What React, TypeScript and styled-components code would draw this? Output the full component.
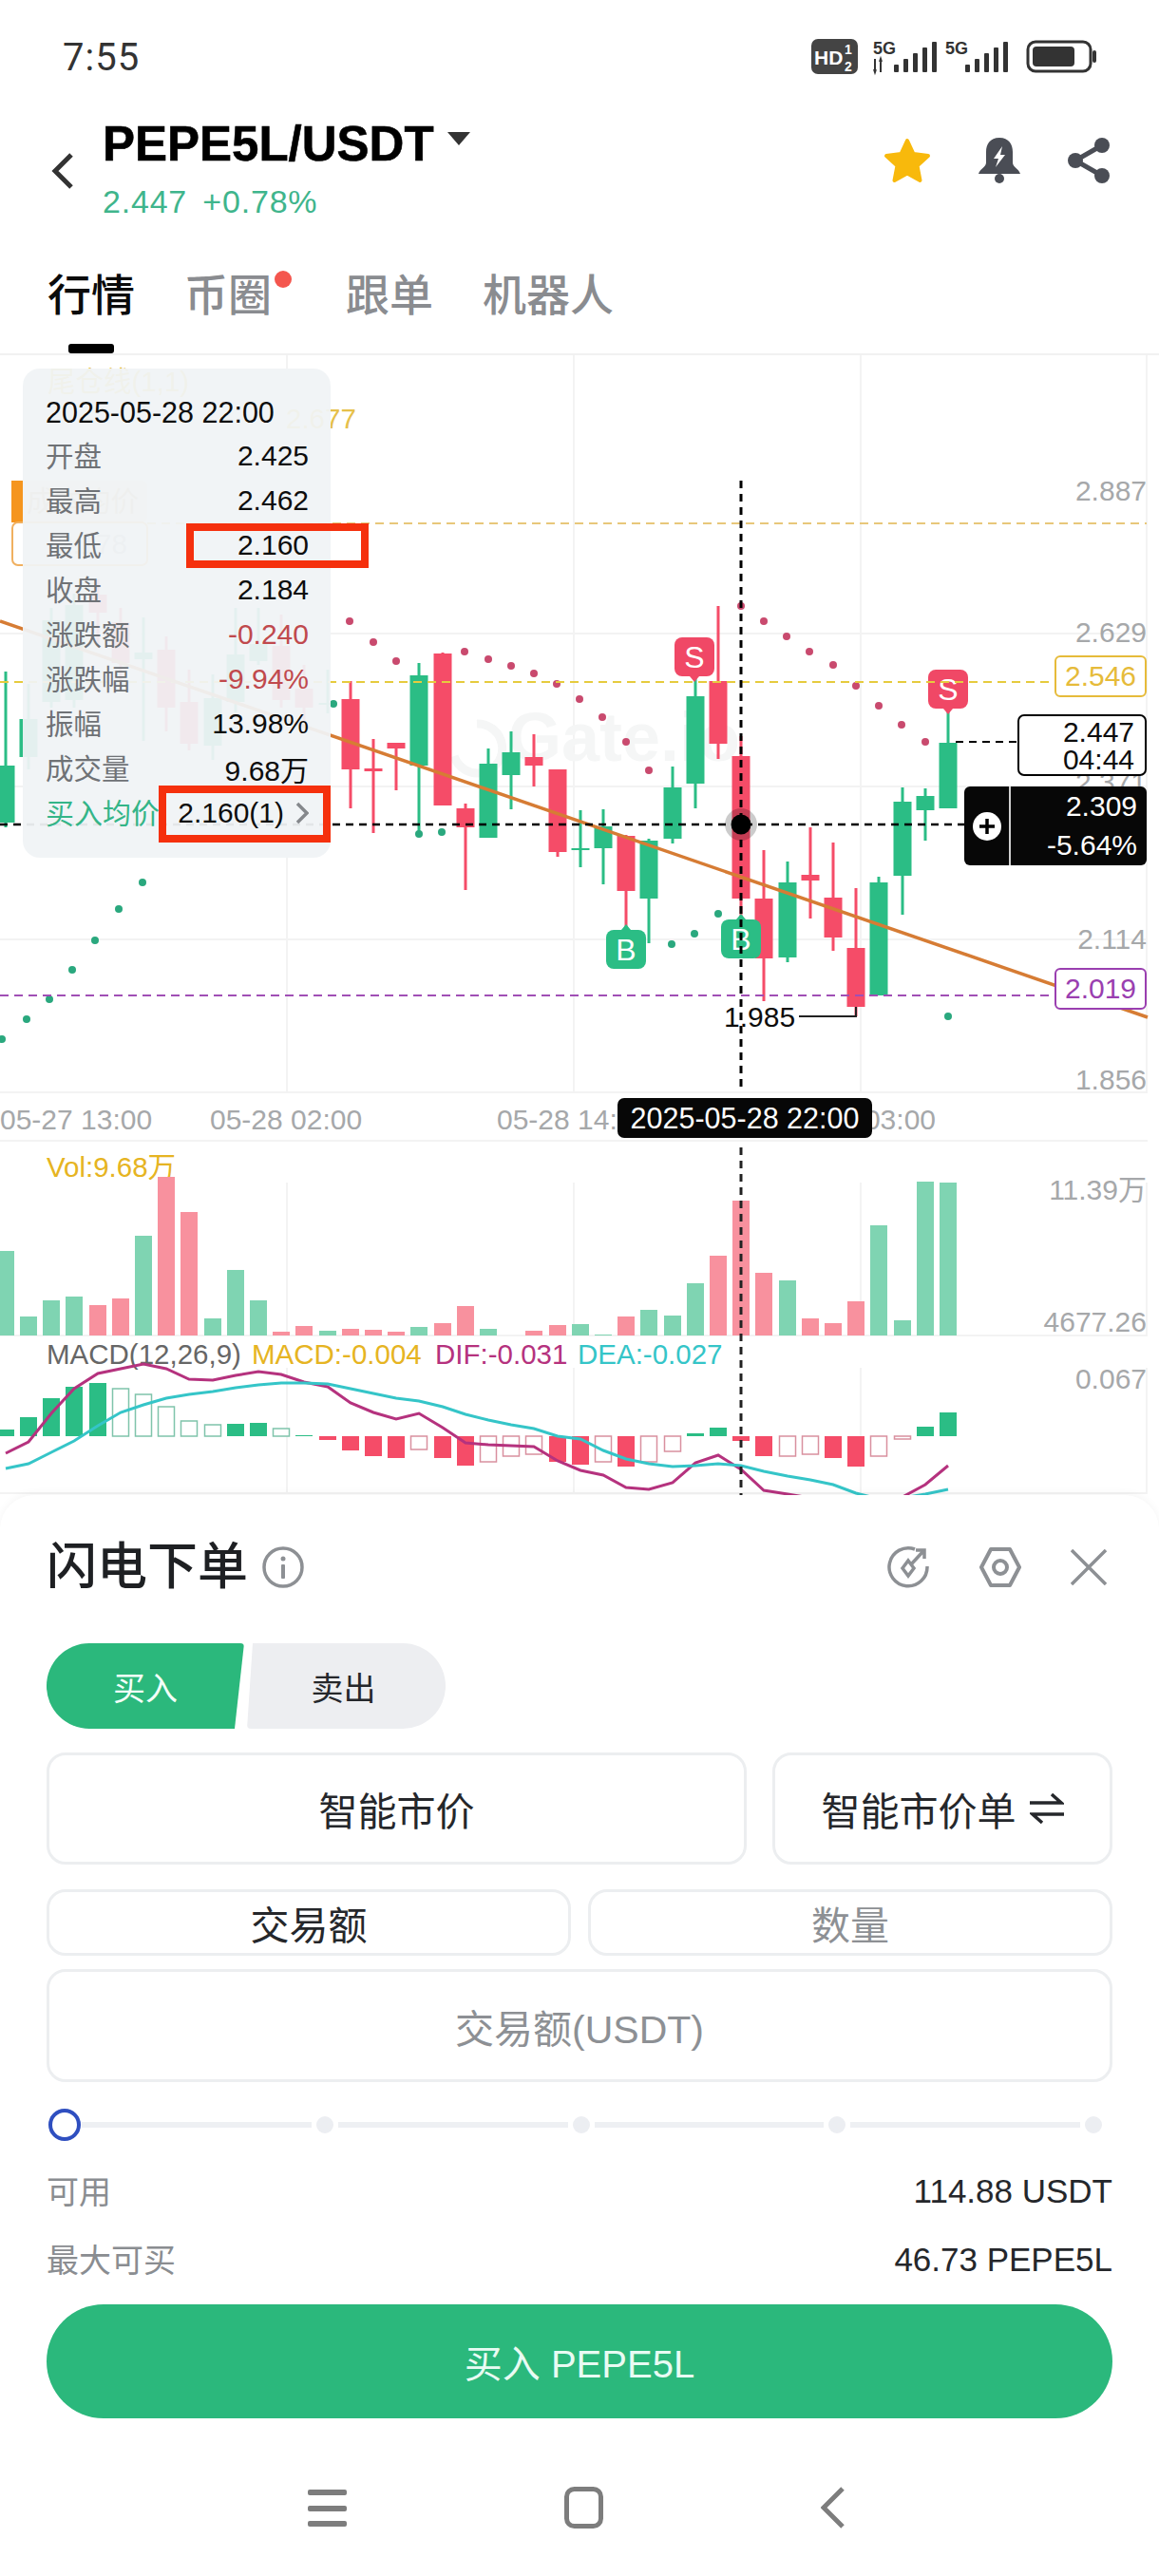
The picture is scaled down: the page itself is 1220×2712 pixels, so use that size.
import React from 'react';
import styled, { createGlobalStyle } from 'styled-components';

const GlobalStyle = createGlobalStyle`
  html, body {
    margin: 0;
    padding: 0;
    background: #fff;
    font-family: "Liberation Sans", "Noto Sans CJK SC", sans-serif;
  }
  * { box-sizing: border-box; }
`;

const Screen = styled.div`
  width: 1220px;
  height: 2712px;
  overflow: hidden;
  display: flex;
  flex-direction: column;
  background: #fff;
`;

const StatusBar = styled.div`
  height: 120px;
  padding: 0 65px 0 66px;
  display: flex;
  justify-content: space-between;
  align-items: center;
`;

const Clock = styled.span`
  font-family: "Roboto", sans-serif;
  font-size: 40px;
  letter-spacing: 1px;
  color: #333;
`;

const Header = styled.div`
  height: 120px;
  padding: 0 51px 0 53px;
  display: flex;
  align-items: center;
`;

const TitleBlock = styled.div`
  margin-left: 29px;
  flex: 1;
  display: flex;
  flex-direction: column;
  padding-bottom: 7px;
`;

const TitleRow = styled.div`
  display: flex;
  align-items: flex-start;
  gap: 14px;
`;

const Pair = styled.div`
  font-size: 51px;
  line-height: 56px;
  font-weight: 700;
  color: #000;
  -webkit-text-stroke: 0.6px #000;
`;

const Ticker = styled.div`
  margin-top: 14px;
  font-size: 34px;
  line-height: 36px;
  font-weight: 500;
  color: #3fb58c;
  letter-spacing: 0.8px;
  word-spacing: 6px;
`;

const HeaderIcons = styled.div`
  margin-bottom: 22px;
  display: flex;
  align-items: center;
  gap: 48px;
`;

const Tabs = styled.div`
  height: 132px;
  padding: 45px 0 0 50px;
  display: flex;
  gap: 52px;
`;

const Tab = styled.div<{ $active?: boolean; $dot?: boolean }>`
  position: relative;
  height: 87px;
  font-size: 46px;
  line-height: 52px;
  font-weight: 500;
  color: ${(p) => (p.$active ? '#0b0b0b' : '#8a8c90')};
  margin-right: ${(p) => (p.$dot ? '26px' : '0')};

  ${(p) =>
    p.$active &&
    `&::after {
      content: '';
      position: absolute;
      left: 22px;
      bottom: 0;
      width: 48px;
      height: 10px;
      border-radius: 3px;
      background: #000;
    }`}

  ${(p) =>
    p.$dot &&
    `&::before {
      content: '';
      position: absolute;
      left: 95px;
      top: 0;
      width: 18px;
      height: 18px;
      border-radius: 50%;
      background: #f4564e;
    }`}
`;

const Chart = styled.div`
  position: relative;
  height: 1202px;
  overflow: hidden;
  border-top: 2px solid #f1f1f1;
`;

const ChartCanvas = styled.svg`
  display: block;
  position: absolute;
  left: 0;
  top: -2px;
`;

const AxisText = styled.text`
  font-size: 30px;
  fill: #a6a8aa;
`;

const IndicatorText = styled.text<{ $color: string }>`
  font-size: 29.5px;
  fill: ${(p) => p.$color};
`;

const MarkerText = styled.text`
  font-size: 32px;
  fill: #fff;
  text-anchor: middle;
`;

const Watermark = styled.text`
  font-size: 72px;
  font-weight: 700;
  fill: #f5f6f6;
`;

const InfoCard = styled.div`
  position: absolute;
  left: 24px;
  top: 14px;
  width: 324px;
  height: 515px;
  padding: 23px 23px 0 24px;
  border-radius: 18px;
  background: rgba(240, 243, 245, 0.94);
`;

const InfoDate = styled.div`
  height: 45px;
  font-size: 30.5px;
  line-height: 47px;
  color: #0d0d0d;
`;

const InfoRow = styled.div`
  height: 47px;
  display: flex;
  justify-content: space-between;
  align-items: center;
`;

const InfoLabel = styled.span<{ $accent?: boolean }>`
  margin-bottom: 3px;
  font-size: ${(p) => (p.$accent ? '30px' : '29.5px')};
  color: ${(p) => (p.$accent ? '#34b588' : '#6f7276')};
`;

const InfoValue = styled.span<{ $down?: boolean }>`
  display: flex;
  align-items: center;
  gap: 12px;
  font-size: 30px;
  color: ${(p) => (p.$down ? '#c0494d' : '#0d0d0d')};
`;

const Highlight = styled.div<{ $x: number; $y: number; $w: number; $h: number }>`
  position: absolute;
  left: ${(p) => p.$x}px;
  top: ${(p) => p.$y}px;
  width: ${(p) => p.$w}px;
  height: ${(p) => p.$h}px;
  border: 8px solid #f5300d;
`;

const PriceTag = styled.div<{ $y: number; $color: string }>`
  position: absolute;
  left: 1110px;
  top: ${(p) => p.$y}px;
  width: 97px;
  height: 44px;
  display: flex;
  align-items: center;
  justify-content: center;
  background: #fff;
  border: 2px solid ${(p) => p.$color};
  border-radius: 6px;
  font-size: 30px;
  color: ${(p) => p.$color};
`;

const LastPriceTag = styled.div`
  position: absolute;
  left: 1071px;
  top: 378px;
  width: 136px;
  height: 65px;
  padding-right: 11px;
  display: flex;
  flex-direction: column;
  align-items: flex-end;
  justify-content: center;
  background: #fff;
  border: 2px solid #000;
  border-radius: 7px;
  font-size: 30px;
  line-height: 29px;
  color: #0d0d0d;
`;

const CrossTag = styled.div`
  position: absolute;
  left: 1015px;
  top: 454px;
  width: 192px;
  height: 83px;
  display: flex;
  background: #070707;
  border-radius: 6px;
  color: #fff;
`;

const CrossPlus = styled.div`
  width: 49px;
  display: flex;
  align-items: center;
  justify-content: center;
  border-right: 2px solid #cfcfcf;
`;

const CrossValues = styled.div`
  flex: 1;
  padding-right: 10px;
  display: flex;
  flex-direction: column;
  align-items: flex-end;
  justify-content: center;
  gap: 13px;
  font-size: 30px;
  line-height: 28px;
`;

const TimeTag = styled.div`
  position: absolute;
  left: 650px;
  top: 782px;
  width: 268px;
  height: 42px;
  display: flex;
  align-items: center;
  justify-content: center;
  background: #070707;
  border-radius: 7px;
  font-size: 30.5px;
  color: #fff;
`;

const Panel = styled.div`
  flex: 1;
  position: relative;
  padding: 50px 49px 0;
  background: #fff;
  border-radius: 36px 36px 0 0;
  box-shadow: 0 -2px 8px rgba(0, 0, 0, 0.04);
  display: flex;
  flex-direction: column;
`;

const PanelHead = styled.div`
  height: 52px;
  display: flex;
  align-items: center;
`;

const PanelTitle = styled.div`
  font-size: 53px;
  line-height: 52px;
  font-weight: 500;
  color: #1e2023;
  margin-right: 14px;
`;

const PanelActions = styled.div`
  margin-left: auto;
  padding-right: 6px;
  display: flex;
  align-items: center;
  gap: 52px;
`;

const SideSwitch = styled.div`
  margin-top: 54px;
  display: flex;
  gap: 3px;
`;

const SideButton = styled.div<{ $buy?: boolean }>`
  width: ${(p) => (p.$buy ? '208px' : '209px')};
  height: 90px;
  padding-right: ${(p) => (p.$buy ? '0' : '6px')};
  display: flex;
  align-items: center;
  justify-content: center;
  font-size: 34px;
  color: ${(p) => (p.$buy ? '#f2fff9' : '#25272b')};
  background: ${(p) => (p.$buy ? '#2bb87c' : '#edeef1')};
  border-radius: ${(p) => (p.$buy ? '45px 4px 4px 45px' : '4px 45px 45px 4px')};
  clip-path: ${(p) =>
    p.$buy
      ? 'polygon(0 0, 100% 0, calc(100% - 10px) 100%, 0 100%)'
      : 'polygon(6px 0, 100% 0, 100% 100%, 0 100%)'};
`;

const MarketRow = styled.div`
  margin-top: 25px;
  display: grid;
  grid-template-columns: 737px 1fr;
  gap: 27px;
`;

const Field = styled.div<{ $h: number; $muted?: boolean }>`
  height: ${(p) => p.$h}px;
  display: flex;
  align-items: center;
  justify-content: center;
  gap: 14px;
  border: 3px solid #eceef0;
  border-radius: 20px;
  font-size: 41px;
  color: ${(p) => (p.$muted ? '#8d9094' : '#25272b')};
`;

const AmountTabs = styled.div`
  margin-top: 26px;
  display: grid;
  grid-template-columns: 1fr 1fr;
  gap: 18px;
`;

const AmountInput = styled(Field)`
  margin-top: 14px;
`;

const Slider = styled.div`
  margin-top: 28px;
  height: 34px;
  padding: 0 11px 0 2px;
  display: flex;
  align-items: center;
  gap: 5px;
`;

const SliderThumb = styled.div`
  width: 34px;
  height: 34px;
  margin-right: -4px;
  border-radius: 50%;
  border: 4px solid #2f4fc0;
  background: #fff;
`;

const SliderTrack = styled.div`
  flex: 1;
  height: 6px;
  background: #eef0f3;
`;

const SliderTick = styled.div`
  width: 18px;
  height: 18px;
  border-radius: 50%;
  background: #eceef2;
`;

const BalanceList = styled.div`
  margin-top: 33px;
  display: flex;
  flex-direction: column;
  gap: 32px;
`;

const BalanceRow = styled.div`
  height: 40px;
  display: flex;
  justify-content: space-between;
  align-items: center;
`;

const BalanceLabel = styled.span`
  margin-bottom: 4px;
  font-size: 34px;
  color: #8a8d91;
`;

const BalanceValue = styled.span`
  font-size: 35px;
  color: #25272b;
`;

const BuyButton = styled.div`
  margin-top: 27px;
  height: 120px;
  flex-shrink: 0;
  display: flex;
  align-items: center;
  justify-content: center;
  border-radius: 60px;
  background: #2bb87c;
  font-size: 40px;
  color: #e8fbf3;
`;

const NavBar = styled.div`
  flex: 1;
  padding: 22px 7px 0 0;
  display: flex;
  align-items: center;
  justify-content: center;
  gap: 229px;
`;

// [body top, body bottom, wick top, wick bottom, up]
const candles: [number, number, number, number, boolean][] = [
  [806, 866, 707, 871, true],
  [757, 797, 720, 810, true],
  [653, 739, 640, 745, true],
  [637, 737, 625, 745, true],
  [626, 645, 610, 680, false],
  [655, 698, 640, 720, false],
  [687, 694, 650, 780, true],
  [684, 745, 670, 770, false],
  [739, 783, 705, 790, false],
  [735, 785, 710, 800, true],
  [689, 739, 640, 750, true],
  [678, 696, 640, 700, true],
  [680, 737, 647, 745, false],
  [725, 745, 700, 760, false],
  [740, 742, 705, 751, true],
  [736, 810, 717, 851, false],
  [809, 812, 778, 877, false],
  [782, 788, 782, 832, false],
  [711, 806, 698, 878, true],
  [688, 848, 687, 848, false],
  [851, 871, 846, 937, false],
  [804, 882, 788, 882, true],
  [792, 816, 770, 852, true],
  [797, 806, 773, 828, false],
  [810, 897, 810, 902, false],
  [893, 895, 853, 913, true],
  [870, 893, 852, 931, true],
  [880, 938, 879, 978, false],
  [885, 946, 883, 993, true],
  [829, 883, 807, 888, true],
  [733, 825, 712, 851, true],
  [717, 783, 638, 799, false],
  [796, 946, 775, 967, false],
  [946, 1009, 895, 1054, false],
  [929, 1008, 907, 1013, true],
  [921, 927, 871, 967, false],
  [945, 987, 887, 1001, false],
  [998, 1060, 935, 1070, false],
  [929, 1048, 923, 1048, true],
  [844, 922, 829, 963, true],
  [838, 853, 830, 885, true],
  [782, 851, 748, 851, true],
];

const volumes = [
  89, 20, 37, 41, 32, 39, 105, 167, 130, 18, 69, 37, 4, 10, 5, 7, 6, 4, 9, 13, 31, 7, 0, 5, 11, 12,
  1, 20, 27, 21, 55, 84, 142, 66, 58, 18, 13, 36, 116, 16, 162, 161,
];

// positive goes up from the zero line; hollow bars are the shrinking ones
const macdBars: [number, boolean][] = [
  [7, false], [20, false], [40, false], [52, false], [56, false], [50, true], [44, true],
  [31, true], [16, true], [12, true], [13, false], [14, false], [8, true], [1, false],
  [-4, false], [-15, false], [-21, false], [-23, false], [-14, true], [-23, false], [-31, false],
  [-27, true], [-21, true], [-19, true], [-27, false], [-30, false], [-27, true], [-32, false],
  [-27, true], [-16, true], [3, false], [9, false], [-5, false], [-21, false], [-21, true],
  [-19, true], [-23, false], [-32, false], [-21, true], [-3, true], [10, false], [25, false],
];

const difLine = [
  1530, 1518, 1488, 1462, 1446, 1441, 1436, 1441, 1452, 1453, 1448, 1444, 1447, 1455, 1460, 1477,
  1487, 1494, 1488, 1503, 1519, 1521, 1522, 1523, 1538, 1548, 1553, 1566, 1568, 1561, 1540, 1532,
  1547, 1569, 1573, 1577, 1582, 1587, 1585, 1576, 1563, 1543,
];

const deaLine = [
  1546, 1541, 1529, 1517, 1501, 1487, 1479, 1472, 1468, 1465, 1461, 1458, 1456, 1456, 1457, 1462,
  1467, 1472, 1475, 1481, 1489, 1495, 1500, 1504, 1512, 1515, 1527, 1536, 1541, 1544, 1543, 1541,
  1543, 1549, 1554, 1558, 1563, 1572, 1578, 1577, 1573, 1568,
];

const redDots = [
  [974, 781], [949, 763], [925, 743], [901, 722], [877, 700], [852, 686], [828, 670], [804, 654],
  [780, 638], [683, 811], [659, 781], [634, 755], [610, 736], [586, 720], [562, 709], [538, 701],
  [514, 694], [489, 686], [417, 696], [393, 676], [368, 654],
];

const greenDots = [
  [998, 1070], [756, 962], [731, 983], [707, 994], [441, 878], [465, 876], [351, 741], [150, 929],
  [125, 957], [100, 990], [76, 1021], [52, 1052], [28, 1073], [2, 1094],
];

const UP = '#2bbd85';
const DOWN = '#f54c68';
const candleX = (i: number) => Math.round(998 - 24.2 * (41 - i));
const toPoints = (line: number[]) => line.map((y, i) => `${candleX(i)},${y}`).join(' ');

const Marker = ({ x, y, label, color }: { x: number; y: number; label: string; color: string }) => (
  <g>
    <rect x={x - 21} y={y} width={42} height={41} rx={8} fill={color} />
    <path d={`M${x - 5} ${y + (label === 'S' ? 41 : 0)} L${x} ${y + (label === 'S' ? 47 : -6)} L${x + 5} ${y + (label === 'S' ? 41 : 0)}Z`} fill={color} />
    <MarkerText x={x} y={y + 32}>
      {label}
    </MarkerText>
  </g>
);

const ChartDrawing = () => (
  <ChartCanvas width={1220} height={1204} viewBox="0 372 1220 1204">
    {/* grid */}
    <g stroke="#f3f3f3" strokeWidth={2}>
      {[667, 828, 989, 1150, 1201, 1406, 1572].map((y) => (
        <line key={y} x1={0} x2={1208} y1={y} y2={y} />
      ))}
      {[302, 604, 906, 1207].map((x) => (
        <g key={x}>
          <line x1={x} x2={x} y1={374} y2={1150} />
          <line x1={x} x2={x} y1={1245} y2={1406} />
          <line x1={x} x2={x} y1={1440} y2={1572} />
        </g>
      ))}
    </g>

    <Watermark x={535} y={801}>
      Gate.io
    </Watermark>
    <path d="M502 762 A26 26 0 1 1 478 796" fill="none" stroke="#f5f6f6" strokeWidth={9} />

    {/* position lines that sit behind the info card */}
    <IndicatorText $color="#e6c04a" x={50} y={412}>
      尾仓线(1,1)
    </IndicatorText>
    <IndicatorText $color="#e6c04a" x={301} y={451}>
      2.677
    </IndicatorText>
    <rect x={12} y={506} width={143} height={44} rx={6} fill="#fbe8d0" />
    <rect x={12} y={506} width={12} height={44} fill="#f5951e" />
    <IndicatorText $color="#c9a67a" x={28} y={538}>
      成本均价
    </IndicatorText>
    <rect x={13} y={550} width={142} height={45} rx={6} fill="#fff" stroke="#f0b060" strokeWidth={2} />
    <IndicatorText $color="#b0b0b0" x={60} y={583}>
      2.178
    </IndicatorText>

    {/* axis labels */}
    <g textAnchor="end">
      <AxisText x={1207} y={527}>2.887</AxisText>
      <AxisText x={1207} y={676}>2.629</AxisText>
      <AxisText x={1207} y={834}>2.371</AxisText>
      <AxisText x={1207} y={999}>2.114</AxisText>
      <AxisText x={1207} y={1147}>1.856</AxisText>
      <AxisText x={1207} y={1263}>11.39万</AxisText>
      <AxisText x={1207} y={1402}>4677.26</AxisText>
      <AxisText x={1207} y={1462}>0.067</AxisText>
      <AxisText x={985} y={1189}>03:00</AxisText>
    </g>
    <AxisText x={0} y={1189}>05-27 13:00</AxisText>
    <AxisText x={221} y={1189}>05-28 02:00</AxisText>
    <AxisText x={523} y={1189}>05-28 14:</AxisText>

    {/* candles */}
    {candles.map(([top, bottom, wickTop, wickBottom, up], i) => {
      const x = candleX(i);
      const color = up ? UP : DOWN;
      return (
        <g key={i} fill={color}>
          <rect x={x - 1.5} y={wickTop} width={3} height={wickBottom - wickTop} />
          <rect x={x - 9.5} y={top} width={19} height={bottom - top} />
        </g>
      );
    })}
    {redDots.map(([x, y]) => (
      <circle key={`${x}-${y}`} cx={x} cy={y} r={4} fill="#c94a6e" />
    ))}
    {greenDots.map(([x, y]) => (
      <circle key={`${x}-${y}`} cx={x} cy={y} r={4} fill="#2aa87e" />
    ))}

    <Marker x={731} y={671} label="S" color="#f04866" />
    <Marker x={998} y={705} label="S" color="#f04866" />
    <Marker x={659} y={979} label="B" color="#2bbd85" />
    <Marker x={780} y={968} label="B" color="#2bbd85" />

    {/* price lines and trend */}
    <line x1={155} x2={1207} y1={551} y2={551} stroke="#e8c77a" strokeWidth={2} strokeDasharray="9 6" />
    <line x1={0} x2={1110} y1={718} y2={718} stroke="#e6cb3e" strokeWidth={2} strokeDasharray="9 6" />
    <line x1={0} x2={1110} y1={1048} y2={1048} stroke="#a04fb5" strokeWidth={2} strokeDasharray="9 6" />
    <line x1={0} x2={1208} y1={654} y2={1071} stroke="#d67c34" strokeWidth={3.5} />

    {/* low marker */}
    <text x={762} y={1081} fontSize={30} fill="#0d0d0d">
      1.985
    </text>
    <path d="M841 1070 H901 V1060" fill="none" stroke="#222" strokeWidth={2} />
    <line x1={1006} x2={1071} y1={781} y2={781} stroke="#000" strokeWidth={2} strokeDasharray="8 6" />

    {/* volume */}
    <IndicatorText $color="#e6b422" x={49} y={1239}>
      Vol:9.68万
    </IndicatorText>
    {volumes.map((h, i) => (
      <rect
        key={i}
        x={candleX(i) - 9}
        y={1406 - h}
        width={18}
        height={h}
        fill={candles[i][4] ? '#7fd4b2' : '#f8919e'}
      />
    ))}

    {/* macd */}
    <IndicatorText $color="#666" x={49} y={1436}>MACD(12,26,9)</IndicatorText>
    <IndicatorText $color="#e6b422" x={265} y={1436}>MACD:-0.004</IndicatorText>
    <IndicatorText $color="#b5327e" x={458} y={1436}>DIF:-0.031</IndicatorText>
    <IndicatorText $color="#35c5c8" x={608} y={1436}>DEA:-0.027</IndicatorText>
    {macdBars.map(([h, hollow], i) => {
      const color = h > 0 ? UP : DOWN;
      const y = h > 0 ? 1512 - h : 1512;
      const height = Math.abs(h);
      return hollow ? (
        <rect
          key={i}
          x={candleX(i) - 8.5}
          y={y}
          width={17}
          height={height}
          fill="#fff"
          stroke={h > 0 ? '#7fc4ab' : '#d9909f'}
          strokeWidth={1.5}
        />
      ) : (
        <rect key={i} x={candleX(i) - 9} y={y} width={18} height={height} fill={color} />
      );
    })}
    <polyline points={toPoints(difLine)} fill="none" stroke="#b5327e" strokeWidth={3} />
    <polyline points={toPoints(deaLine)} fill="none" stroke="#35c5c8" strokeWidth={3} />

    {/* crosshair */}
    <line x1={0} x2={1015} y1={868} y2={868} stroke="#000" strokeWidth={2.5} strokeDasharray="8 6" />
    <line x1={780} x2={780} y1={506} y2={1150} stroke="#000" strokeWidth={3} strokeDasharray="8 6" />
    <line x1={780} x2={780} y1={1208} y2={1574} stroke="#222" strokeWidth={3} strokeDasharray="8 6" />
    <circle cx={780} cy={868} r={17} fill="#000" fillOpacity={0.2} />
    <circle cx={780} cy={868} r={10.5} fill="#000" />
  </ChartCanvas>
);

const infoRows: { label: string; value: string; down?: boolean }[] = [
  { label: '开盘', value: '2.425' },
  { label: '最高', value: '2.462' },
  { label: '最低', value: '2.160' },
  { label: '收盘', value: '2.184' },
  { label: '涨跌额', value: '-0.240', down: true },
  { label: '涨跌幅', value: '-9.94%', down: true },
  { label: '振幅', value: '13.98%' },
  { label: '成交量', value: '9.68万' },
];

const StatusIcons = () => (
  <svg width={301} height={40} viewBox="854 40 301 40">
    <rect x={854} y={41} width={49} height={37} rx={7} fill="#444" />
    <text x={857} y={68} fontSize={21} fontWeight={700} fill="#fff">HD</text>
    <text x={889} y={57} fontSize={14} fontWeight={700} fill="#fff">1</text>
    <text x={889} y={75} fontSize={14} fontWeight={700} fill="#fff">2</text>
    <text x={919} y={57} fontSize={18} fontWeight={700} fill="#333">5G</text>
    <path d="M921 62v14M920 73l1 3 1-3M927 76V62M926 65l1-3 1 3" stroke="#333" strokeWidth={2} fill="none" />
    <g fill="#333">
      <rect x={941} y={68} width={5} height={8} rx={1} />
      <rect x={951} y={62} width={5} height={14} rx={1} />
      <rect x={961} y={56} width={5} height={20} rx={1} />
      <rect x={971} y={50} width={5} height={26} rx={1} />
      <rect x={981} y={44} width={5} height={32} rx={1} />
    </g>
    <text x={995} y={57} fontSize={18} fontWeight={700} fill="#333">5G</text>
    <g fill="#333">
      <rect x={1016} y={68} width={5} height={8} rx={1} />
      <rect x={1026} y={62} width={5} height={14} rx={1} />
      <rect x={1036} y={56} width={5} height={20} rx={1} />
      <rect x={1046} y={50} width={5} height={26} rx={1} />
      <rect x={1056} y={44} width={5} height={32} rx={1} />
    </g>
    <rect x={1082} y={44} width={66} height={31} rx={8} fill="none" stroke="#333" strokeWidth={3} />
    <rect x={1087} y={49} width={44} height={21} rx={4} fill="#333" />
    <rect x={1150} y={53} width={4} height={13} rx={2} fill="#333" />
  </svg>
);

const BackIcon = () => (
  <svg width={26} height={40} viewBox="0 0 26 40">
    <path d="M22 3 L5 20 L22 37" fill="none" stroke="#333" strokeWidth={5} />
  </svg>
);

const CaretIcon = () => (
  <svg width={24} height={16} viewBox="0 0 24 16" style={{ marginTop: 14 }}>
    <path d="M0 1 H24 L12 15Z" fill="#333" />
  </svg>
);

const StarIcon = () => (
  <svg width={52} height={48} viewBox="0 0 52 48">
    <path
      d="M26 3 L32.5 17 L48 19 L36.5 29.5 L39.5 45 L26 37.5 L12.5 45 L15.5 29.5 L4 19 L19.5 17Z"
      fill="#f8b90c"
      stroke="#f8b90c"
      strokeWidth={4}
      strokeLinejoin="round"
    />
  </svg>
);

const BellIcon = () => (
  <svg width={46} height={48} viewBox="0 0 46 48">
    <path
      d="M23 0 C13 0 9 7 9 15 V26 C9 31 3 32 1 38 H45 C43 32 37 31 37 26 V15 C37 7 33 0 23 0Z"
      fill="#4a4d55"
    />
    <circle cx={23} cy={43} r={5} fill="#4a4d55" />
    <path d="M26 9 L17 22 H22 L19 31 L29 18 H24Z" fill="#fff" />
  </svg>
);

const ShareIcon = () => (
  <svg width={46} height={48} viewBox="0 0 46 48">
    <path d="M37 8 L9 24 L37 40" fill="none" stroke="#4a4d55" strokeWidth={5} />
    <circle cx={37} cy={8} r={8} fill="#4a4d55" />
    <circle cx={9} cy={24} r={8} fill="#4a4d55" />
    <circle cx={37} cy={40} r={8} fill="#4a4d55" />
  </svg>
);

const InfoIcon = () => (
  <svg width={46} height={46} viewBox="0 0 46 46">
    <circle cx={23} cy={23} r={20} fill="none" stroke="#8d9094" strokeWidth={3.5} />
    <circle cx={23} cy={14} r={2.5} fill="#8d9094" />
    <rect x={21} y={20} width={4} height={15} rx={1} fill="#8d9094" />
  </svg>
);

const SpinIcon = () => (
  <svg width={46} height={46} viewBox="0 0 46 46" fill="none" stroke="#8d9094" strokeWidth={3.5}>
    <path d="M30 4 A20 20 0 1 0 43 22" />
    <path d="M26 20 L39 6 M31 5 H40 V14" />
    <path d="M23 16 L29 24 L23 32 L17 24Z" />
  </svg>
);

const HexIcon = () => (
  <svg width={44} height={46} viewBox="0 0 44 46" fill="none" stroke="#8d9094" strokeWidth={4}>
    <path d="M12 4 H32 L42 23 L32 42 H12 L2 23Z" strokeLinejoin="round" />
    <circle cx={22} cy={23} r={7} />
  </svg>
);

const CloseIcon = () => (
  <svg width={38} height={38} viewBox="0 0 38 38" stroke="#8d9094" strokeWidth={3.5}>
    <path d="M1 1 L37 37 M37 1 L1 37" />
  </svg>
);

const SwapIcon = () => (
  <svg width={36} height={34} viewBox="0 0 36 34" fill="none" stroke="#25272b" strokeWidth={3.5}>
    <path d="M0 11 H33 L23 2" />
    <path d="M36 23 H3 L13 32" />
  </svg>
);

const PlusIcon = () => (
  <svg width={32} height={32} viewBox="0 0 32 32">
    <circle cx={16} cy={16} r={15} fill="#fff" />
    <path d="M8 16 H24 M16 8 V24" stroke="#000" strokeWidth={3.5} />
  </svg>
);

const ChevronIcon = () => (
  <svg width={14} height={24} viewBox="0 0 14 24">
    <path d="M2 2 L12 12 L2 22" fill="none" stroke="#85888c" strokeWidth={3.5} />
  </svg>
);

const MenuIcon = () => (
  <svg width={41} height={40} viewBox="0 0 41 40" fill="#7d7d7d">
    <rect y={1} width={41} height={6} rx={2} />
    <rect y={18} width={41} height={6} rx={2} />
    <rect y={34} width={41} height={6} rx={2} />
  </svg>
);

const HomeIcon = () => (
  <svg width={41} height={44} viewBox="0 0 41 44">
    <rect x={2.5} y={2.5} width={36} height={39} rx={8} fill="none" stroke="#7d7d7d" strokeWidth={5} />
  </svg>
);

const NavBackIcon = () => (
  <svg width={25} height={44} viewBox="0 0 25 44">
    <path d="M23 2 L3 22 L23 42" fill="none" stroke="#7d7d7d" strokeWidth={5} />
  </svg>
);

const App = () => {
  return (
    <Screen>
      <GlobalStyle />
      <StatusBar>
        <Clock>7:55</Clock>
        <StatusIcons />
      </StatusBar>

      <Header>
        <BackIcon />
        <TitleBlock>
          <TitleRow>
            <Pair>PEPE5L/USDT</Pair>
            <CaretIcon />
          </TitleRow>
          <Ticker>2.447 +0.78%</Ticker>
        </TitleBlock>
        <HeaderIcons>
          <StarIcon />
          <BellIcon />
          <ShareIcon />
        </HeaderIcons>
      </Header>

      <Tabs>
        <Tab $active>行情</Tab>
        <Tab $dot>币圈</Tab>
        <Tab>跟单</Tab>
        <Tab>机器人</Tab>
      </Tabs>

      <Chart>
        <ChartDrawing />
        <InfoCard>
          <InfoDate>2025-05-28 22:00</InfoDate>
          {infoRows.map((row) => (
            <InfoRow key={row.label}>
              <InfoLabel>{row.label}</InfoLabel>
              <InfoValue $down={row.down}>{row.value}</InfoValue>
            </InfoRow>
          ))}
          <InfoRow>
            <InfoLabel $accent>买入均价</InfoLabel>
            <InfoValue>
              2.160(1)
              <ChevronIcon />
            </InfoValue>
          </InfoRow>
        </InfoCard>
        <Highlight $x={196} $y={177} $w={192} $h={47} />
        <Highlight $x={167} $y={453} $w={181} $h={60} />
        <PriceTag $y={316} $color="#e6bb3a">2.546</PriceTag>
        <PriceTag $y={645} $color="#9a3fb0">2.019</PriceTag>
        <LastPriceTag>
          <span>2.447</span>
          <span>04:44</span>
        </LastPriceTag>
        <CrossTag>
          <CrossPlus>
            <PlusIcon />
          </CrossPlus>
          <CrossValues>
            <span>2.309</span>
            <span>-5.64%</span>
          </CrossValues>
        </CrossTag>
        <TimeTag>2025-05-28 22:00</TimeTag>
      </Chart>

      <Panel>
        <PanelHead>
          <PanelTitle>闪电下单</PanelTitle>
          <InfoIcon />
          <PanelActions>
            <SpinIcon />
            <HexIcon />
            <CloseIcon />
          </PanelActions>
        </PanelHead>

        <SideSwitch>
          <SideButton $buy>买入</SideButton>
          <SideButton>卖出</SideButton>
        </SideSwitch>

        <MarketRow>
          <Field $h={118}>智能市价</Field>
          <Field $h={118}>
            智能市价单
            <SwapIcon />
          </Field>
        </MarketRow>

        <AmountTabs>
          <Field $h={70}>交易额</Field>
          <Field $h={70} $muted>数量</Field>
        </AmountTabs>
        <AmountInput $h={119} $muted>交易额(USDT)</AmountInput>

        <Slider>
          <SliderThumb />
          <SliderTrack />
          <SliderTick />
          <SliderTrack />
          <SliderTick />
          <SliderTrack />
          <SliderTick />
          <SliderTrack />
          <SliderTick />
        </Slider>

        <BalanceList>
          <BalanceRow>
            <BalanceLabel>可用</BalanceLabel>
            <BalanceValue>114.88 USDT</BalanceValue>
          </BalanceRow>
          <BalanceRow>
            <BalanceLabel>最大可买</BalanceLabel>
            <BalanceValue>46.73 PEPE5L</BalanceValue>
          </BalanceRow>
        </BalanceList>

        <BuyButton>买入 PEPE5L</BuyButton>

        <NavBar>
          <MenuIcon />
          <HomeIcon />
          <NavBackIcon />
        </NavBar>
      </Panel>
    </Screen>
  );
};

export default App;
